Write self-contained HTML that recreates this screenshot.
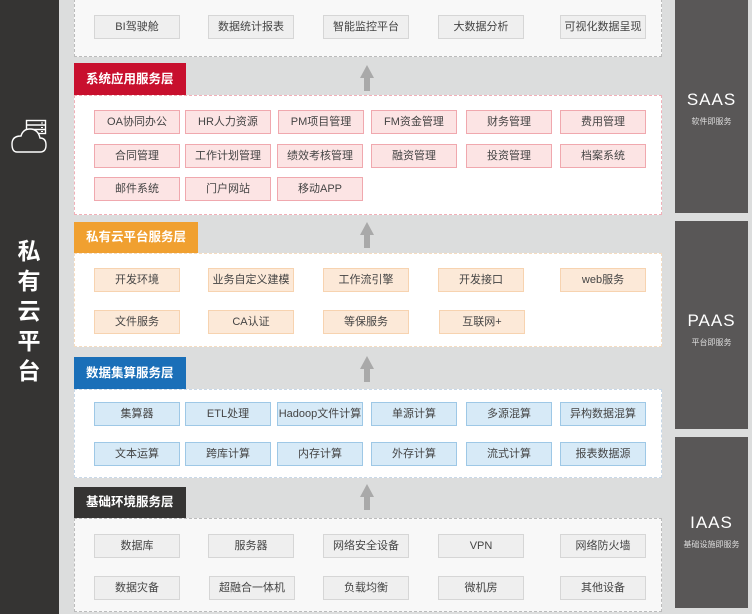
<!DOCTYPE html>
<html><head><meta charset="utf-8"><style>
*{margin:0;padding:0;box-sizing:border-box}
body{width:752px;height:614px;background:#dcdddd;position:relative;overflow:hidden;font-family:"Liberation Sans","Noto Sans CJK SC",sans-serif}
.abs{position:absolute}
.left{left:0;top:0;width:59px;height:614px;background:#353433}
.side{left:675px;width:73px;background:#595757;color:#fff;text-align:center}
.side b{display:block;font-weight:normal;font-size:17px;letter-spacing:1px}
.side i{display:block;font-style:normal;font-size:8px;margin-top:6px;color:#ddd}
.panel{left:74px;width:588px;border:1px dashed #bbb}
.hdr{left:74px;height:32px;color:#fff;font-weight:bold;font-size:12.5px;line-height:32px;padding:0 12px;white-space:nowrap}
.bx{position:absolute;height:24px;font-size:11px;line-height:22px;text-align:center;color:#444;white-space:nowrap}
.g{background:#efefef;border:1px solid #d6d6d6}
.r{background:#fce4e4;border:1px solid #f0a8ae}
.o{background:#fce9d8;border:1px solid #f7d3b0}
.b{background:#d7eaf7;border:1px solid #9ec8e6}
.arrow{left:360px;width:14px}
</style></head><body>
<div class="abs left"></div>
<svg class="abs" style="left:0;top:100px" width="60" height="70" viewBox="0 0 60 70" fill="none" stroke="#fff" stroke-width="1.4">
<rect x="26.5" y="20.5" width="19" height="13" />
<path d="M26.5 25 H45.5 M26.5 29.5 H45.5"/>
<path d="M41 23 H43 M41 27.5 H43 M41 31.5 H43" stroke-width="1"/>
<path d="M17 52 H40 Q46 52 46 45 Q46 38 40 38 Q38 29 30 29 Q23 29 21 36 Q12 36 12 44 Q12 52 17 52 Z" fill="#353433"/>
</svg>
<div class="abs" style="left:14px;top:236px;width:30px;color:#fff;font-size:23px;font-weight:bold;line-height:30px;text-align:center">私<br>有<br>云<br>平<br>台</div>

<div class="abs side" style="top:0;height:213px"><div style="padding-top:90px"><b>SAAS</b><i>软件即服务</i></div></div>
<div class="abs side" style="top:221px;height:208px"><div style="padding-top:90px"><b>PAAS</b><i>平台即服务</i></div></div>
<div class="abs side" style="top:437px;height:171px"><div style="padding-top:76px"><b>IAAS</b><i>基础设施即服务</i></div></div>

<svg class="abs arrow" style="top:65px" width="14" height="26"><path d="M7 0 L14 13 L10 13 L10 26 L4 26 L4 13 L0 13Z" fill="#a9a9a9"/></svg>
<svg class="abs arrow" style="top:222px" width="14" height="26"><path d="M7 0 L14 13 L10 13 L10 26 L4 26 L4 13 L0 13Z" fill="#a9a9a9"/></svg>
<svg class="abs arrow" style="top:356px" width="14" height="26"><path d="M7 0 L14 13 L10 13 L10 26 L4 26 L4 13 L0 13Z" fill="#a9a9a9"/></svg>
<svg class="abs arrow" style="top:484px" width="14" height="26"><path d="M7 0 L14 13 L10 13 L10 26 L4 26 L4 13 L0 13Z" fill="#a9a9a9"/></svg>

<div class="abs panel" style="top:-1px;height:58px;background:#f8f8f8"></div>
<div class="bx g" style="left:94px;top:15px;width:86px">BI驾驶舱</div>
<div class="bx g" style="left:208px;top:15px;width:86px">数据统计报表</div>
<div class="bx g" style="left:323px;top:15px;width:86px">智能监控平台</div>
<div class="bx g" style="left:438px;top:15px;width:86px">大数据分析</div>
<div class="bx g" style="left:560px;top:15px;width:86px">可视化数据呈现</div>

<div class="abs hdr" style="top:63px;background:#c8102e">系统应用服务层</div>
<div class="abs panel" style="top:95px;height:120px;background:#fff;border-color:#f0b0b8"></div>
<div class="bx r" style="left:94px;top:110px;width:86px">OA协同办公</div>
<div class="bx r" style="left:185px;top:110px;width:86px">HR人力资源</div>
<div class="bx r" style="left:278px;top:110px;width:86px">PM项目管理</div>
<div class="bx r" style="left:371px;top:110px;width:86px">FM资金管理</div>
<div class="bx r" style="left:466px;top:110px;width:86px">财务管理</div>
<div class="bx r" style="left:560px;top:110px;width:86px">费用管理</div>
<div class="bx r" style="left:94px;top:144px;width:86px">合同管理</div>
<div class="bx r" style="left:185px;top:144px;width:86px">工作计划管理</div>
<div class="bx r" style="left:277px;top:144px;width:86px">绩效考核管理</div>
<div class="bx r" style="left:371px;top:144px;width:86px">融资管理</div>
<div class="bx r" style="left:466px;top:144px;width:86px">投资管理</div>
<div class="bx r" style="left:560px;top:144px;width:86px">档案系统</div>
<div class="bx r" style="left:94px;top:177px;width:86px">邮件系统</div>
<div class="bx r" style="left:185px;top:177px;width:86px">门户网站</div>
<div class="bx r" style="left:277px;top:177px;width:86px">移动APP</div>

<div class="abs hdr" style="top:222px;height:31px;background:#f0a030;line-height:31px">私有云平台服务层</div>
<div class="abs panel" style="top:253px;height:94px;background:#fff;border-color:#f5dcc0"></div>
<div class="bx o" style="left:94px;top:268px;width:86px">开发环境</div>
<div class="bx o" style="left:208px;top:268px;width:86px">业务自定义建模</div>
<div class="bx o" style="left:323px;top:268px;width:86px">工作流引擎</div>
<div class="bx o" style="left:438px;top:268px;width:86px">开发接口</div>
<div class="bx o" style="left:560px;top:268px;width:86px">web服务</div>
<div class="bx o" style="left:94px;top:310px;width:86px">文件服务</div>
<div class="bx o" style="left:208px;top:310px;width:86px">CA认证</div>
<div class="bx o" style="left:323px;top:310px;width:86px">等保服务</div>
<div class="bx o" style="left:439px;top:310px;width:86px">互联网+</div>

<div class="abs hdr" style="top:357px;background:#1a6fb8">数据集算服务层</div>
<div class="abs panel" style="top:389px;height:89px;background:#fff;border-color:#c8d8e8"></div>
<div class="bx b" style="left:94px;top:402px;width:86px">集算器</div>
<div class="bx b" style="left:185px;top:402px;width:86px">ETL处理</div>
<div class="bx b" style="left:277px;top:402px;width:86px">Hadoop文件计算</div>
<div class="bx b" style="left:371px;top:402px;width:86px">单源计算</div>
<div class="bx b" style="left:466px;top:402px;width:86px">多源混算</div>
<div class="bx b" style="left:560px;top:402px;width:86px">异构数据混算</div>
<div class="bx b" style="left:94px;top:442px;width:86px">文本运算</div>
<div class="bx b" style="left:185px;top:442px;width:86px">跨库计算</div>
<div class="bx b" style="left:277px;top:442px;width:86px">内存计算</div>
<div class="bx b" style="left:371px;top:442px;width:86px">外存计算</div>
<div class="bx b" style="left:466px;top:442px;width:86px">流式计算</div>
<div class="bx b" style="left:560px;top:442px;width:86px">报表数据源</div>

<div class="abs hdr" style="top:487px;height:31px;line-height:31px;background:#353433">基础环境服务层</div>
<div class="abs panel" style="top:518px;height:94px;background:#f8f8f8"></div>
<div class="bx g" style="left:94px;top:534px;width:86px">数据库</div>
<div class="bx g" style="left:208px;top:534px;width:86px">服务器</div>
<div class="bx g" style="left:323px;top:534px;width:86px">网络安全设备</div>
<div class="bx g" style="left:438px;top:534px;width:86px">VPN</div>
<div class="bx g" style="left:560px;top:534px;width:86px">网络防火墙</div>
<div class="bx g" style="left:94px;top:576px;width:86px">数据灾备</div>
<div class="bx g" style="left:209px;top:576px;width:86px">超融合一体机</div>
<div class="bx g" style="left:323px;top:576px;width:86px">负载均衡</div>
<div class="bx g" style="left:438px;top:576px;width:86px">微机房</div>
<div class="bx g" style="left:560px;top:576px;width:86px">其他设备</div>
</body></html>
